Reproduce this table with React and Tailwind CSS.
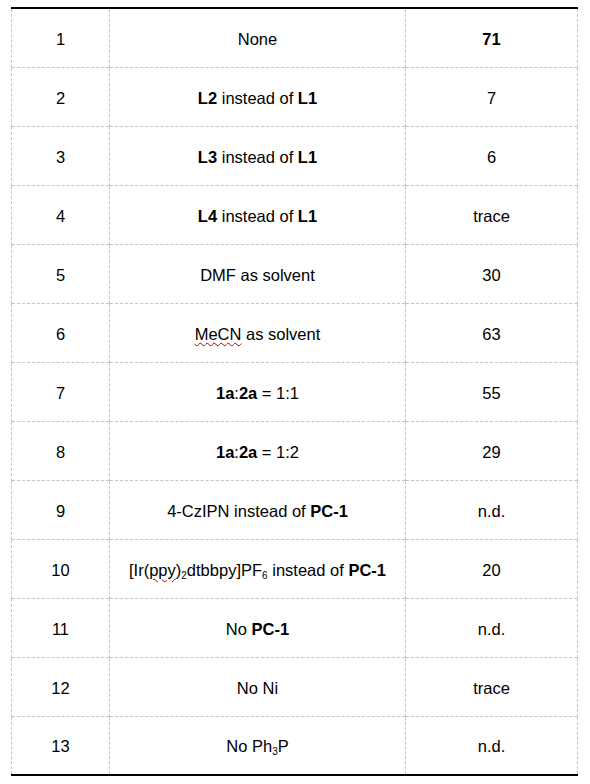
const B = ({ children }) => <b className="font-bold">{children}</b>;
const Sub = ({ children }) => <span className="relative top-[3px] text-[10px]">{children}</span>;
const Squiggle = ({ children }) => (
  <span className="underline decoration-wavy decoration-[#c00000] decoration-1 underline-offset-2">{children}</span>
);

const ROWS = [
  ["1", "None", <B>71</B>],
  ["2", <><B>L2</B> instead of <B>L1</B></>, "7"],
  ["3", <><B>L3</B> instead of <B>L1</B></>, "6"],
  ["4", <><B>L4</B> instead of <B>L1</B></>, "trace"],
  ["5", "DMF as solvent", "30"],
  ["6", <><Squiggle>MeCN</Squiggle> as solvent</>, "63"],
  ["7", <><B>1a</B>:<B>2a</B> = 1:1</>, "55"],
  ["8", <><B>1a</B>:<B>2a</B> = 1:2</>, "29"],
  ["9", <>4-CzIPN instead of <B>PC-1</B></>, "n.d."],
  ["10", <>[Ir(<Squiggle>ppy</Squiggle>)<Sub>2</Sub>dtbbpy]PF<Sub>6</Sub> instead of <B>PC-1</B></>, "20"],
  ["11", <>No <B>PC-1</B></>, "n.d."],
  ["12", "No Ni", "trace"],
  ["13", <>No Ph<Sub>3</Sub>P</>, "n.d."],
];

export default function App() {
  return (
    <div className="w-[590px] h-[784px] bg-white pt-[7px] pl-[11px]" style={{ fontFamily: '"Liberation Sans", Arial, sans-serif' }}>
      <table className="w-[566px] border-collapse border-y-2 border-solid border-black text-[16.5px] text-black table-fixed">
        <colgroup>
          <col className="w-[98px]" />
          <col className="w-[296px]" />
          <col className="w-[172px]" />
        </colgroup>
        <tbody>
          {ROWS.map(([a, b, c], i) => (
            <tr
              key={i}
              className={`h-[59px] ${i === ROWS.length - 1 ? "" : "border-b border-dashed border-[#c4c4c4]"}`}
            >
              <td className="border-x border-dashed border-[#c4c4c4] text-center align-middle p-0 pt-[3px]">{a}</td>
              <td className="border-x border-dashed border-[#c4c4c4] text-center align-middle p-0 pt-[3px] whitespace-nowrap">{b}</td>
              <td className="border-x border-dashed border-[#c4c4c4] text-center align-middle p-0 pt-[3px]">{c}</td>
            </tr>
          ))}
        </tbody>
      </table>
    </div>
  );
}
